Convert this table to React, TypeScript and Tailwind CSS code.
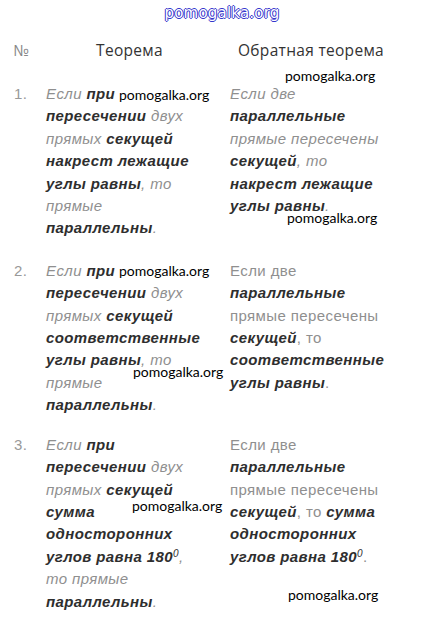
import type { ReactNode } from 'react';

// light italic text and bold italic text used throughout the table
function L({ children, up }: { children: ReactNode; up?: boolean }) {
    return <span className={up ? 'text-[#8f8f8f] not-italic' : 'text-[#8f8f8f] italic'}>{children}</span>;
}

function B({ children }: { children: ReactNode }) {
    return <span className="font-bold italic text-[#2e2e2e]">{children}</span>;
}

function Lines({ lines }: { lines: ReactNode[] }) {
    return (
        <div className="flex flex-col">
            {lines.map((line, i) => (
                <div key={i} className="whitespace-nowrap">
                    {line}
                </div>
            ))}
        </div>
    );
}

const rows: { num: string; left: ReactNode[]; right: ReactNode[]; mt: string }[] = [
    {
        num: '1.',
        mt: 'mt-[22px]',
        left: [
            <><L>Если </L><B>при</B></>,
            <><B>пересечении</B> <L>двух</L></>,
            <><L>прямых</L> <B>секущей</B></>,
            <B>накрест лежащие</B>,
            <><B>углы равны</B><L>, то</L></>,
            <L>прямые</L>,
            <><B>параллельны</B><L>.</L></>,
        ],
        right: [
            <L>Если две</L>,
            <B>параллельные</B>,
            <L>прямые пересечены</L>,
            <><B>секущей</B><L>, то</L></>,
            <B>накрест лежащие</B>,
            <><B>углы равны</B><L>.</L></>,
        ],
    },
    {
        num: '2.',
        mt: 'mt-[20px]',
        left: [
            <><L>Если </L><B>при</B></>,
            <><B>пересечении</B> <L>двух</L></>,
            <><L>прямых</L> <B>секущей</B></>,
            <B>соответственные</B>,
            <><B>углы равны</B><L>, то</L></>,
            <L>прямые</L>,
            <><B>параллельны</B><L>.</L></>,
        ],
        right: [
            <L up>Если две</L>,
            <B>параллельные</B>,
            <L up>прямые пересечены</L>,
            <><B>секущей</B><L up>, то</L></>,
            <B>соответственные</B>,
            <><B>углы равны</B><L up>.</L></>,
        ],
    },
    {
        num: '3.',
        mt: 'mt-[17px]',
        left: [
            <><L>Если </L><B>при</B></>,
            <><B>пересечении</B> <L>двух</L></>,
            <><L>прямых</L> <B>секущей</B></>,
            <B>сумма</B>,
            <B>односторонних</B>,
            <><B>углов равна 180<sup className="text-[10px] font-normal">0</sup></B><L>,</L></>,
            <L>то прямые</L>,
            <><B>параллельны</B><L>.</L></>,
        ],
        right: [
            <L up>Если две</L>,
            <B>параллельные</B>,
            <L up>прямые пересечены</L>,
            <><B>секущей</B><L up>, то </L><B>сумма</B></>,
            <B>односторонних</B>,
            <><B>углов равна 180<sup className="text-[10px] font-normal">0</sup></B><L up>.</L></>,
        ],
    },
];

const marks = [
    'left-[119px] top-[87px]',
    'left-[285px] top-[68px]',
    'left-[287px] top-[210px]',
    'left-[119px] top-[263px]',
    'left-[133px] top-[364px]',
    'left-[132px] top-[498px]',
    'left-[288px] top-[587px]',
];

export default function App() {
    return (
        <div className="relative w-[444px] h-[637px] overflow-hidden bg-white font-['Liberation_Sans',Arial,sans-serif]">
            {/* site logo, hollow blue letters */}
            <div className="pt-[2px] text-center font-['DejaVu_Sans',sans-serif] text-[15px] leading-[22px] tracking-[0.2px] text-white [text-shadow:1px_0_#3535cc,-1px_0_#3535cc,0_1px_#3535cc,0_-1px_#3535cc]">
                pomogalka.org
            </div>

            {/* table header */}
            <div className="mt-[15px] grid grid-cols-[46px_167px_179px] font-['Open_Sans',sans-serif] text-[15.5px] leading-[22px] tracking-[0.3px] text-[#333]">
                <div className="pl-[13px] text-[#888]">№</div>
                <div className="text-center">Теорема</div>
                <div className="pl-[17px] text-center">Обратная теорема</div>
            </div>

            {/* rows */}
            {rows.map((row) => (
                <div key={row.num} className={`${row.mt} grid grid-cols-[46px_184px_1fr] text-[15px] leading-[22.4px] tracking-[0.4px]`}>
                    <div className="pl-[14px] text-[#999]">{row.num}</div>
                    <Lines lines={row.left} />
                    <Lines lines={row.right} />
                </div>
            ))}

            {/* watermarks */}
            {marks.map((pos) => (
                <div key={pos} className={`absolute ${pos} font-['Lato',sans-serif] text-[14px] leading-[16px] text-black`}>
                    pomogalka.org
                </div>
            ))}
        </div>
    );
}
